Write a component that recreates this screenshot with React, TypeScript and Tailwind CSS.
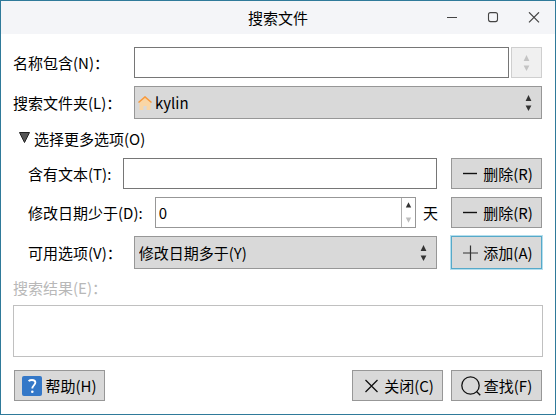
import { useState } from 'react';
import type { ReactNode } from 'react';

function Arrows({ className = 'fill-[#333333]' }: { className?: string }) {
  return (
    <svg width="7" height="17" viewBox="0 0 7 17" className={className} aria-hidden="true">
      <path d="M3.5 1 L6.4 7 H0.6 Z" />
      <path d="M3.5 17 L6.4 11.5 H0.6 Z" />
    </svg>
  );
}

function MinusIcon() {
  return (
    <svg width="20" height="20" viewBox="0 0 20 20" fill="none" stroke="#111111" strokeWidth="1.4" aria-hidden="true">
      <path d="M3 9.5 H17" />
    </svg>
  );
}

function PlusIcon() {
  return (
    <svg width="20" height="20" viewBox="0 0 20 20" fill="none" stroke="#333333" strokeWidth="1.2" aria-hidden="true">
      <path d="M3 10 H18 M10.5 2.5 V17.5" />
    </svg>
  );
}

function CrossIcon() {
  return (
    <svg width="20" height="20" viewBox="0 0 20 20" fill="none" stroke="#111111" strokeWidth="1.3" aria-hidden="true">
      <path d="M4.5 4 L16.5 16 M16.5 4 L4.5 16" />
    </svg>
  );
}

function SearchIcon() {
  return (
    <svg width="20" height="20" viewBox="0 0 20 20" fill="none" stroke="#111111" strokeWidth="1.3" aria-hidden="true">
      <circle cx="9.5" cy="9.5" r="8.7" />
      <path d="M15.5 15.5 L19.3 19.3" />
    </svg>
  );
}

function HelpIcon() {
  return (
    <svg width="20" height="20" viewBox="0 0 20 20" aria-hidden="true">
      <rect width="20" height="20" rx="2" fill="#3478c8" />
      <path d="M6.6 5.2 C7.4 4.4 8.6 4 10 4 C12.2 4 13.4 5 13.4 6.6 C13.4 9 10.3 9.2 10.3 12.6" fill="none" stroke="#ffffff" strokeWidth="1.8" />
      <circle cx="10.3" cy="15.8" r="1.3" fill="#ffffff" />
    </svg>
  );
}

function HomeIcon() {
  return (
    <svg width="14" height="14" viewBox="0 0 14 14" aria-hidden="true">
      <path d="M7 1 L12.5 6 V14 H8.6 V10 H5.4 V14 H1.5 V6 Z" fill="#fad6a5" />
      <path d="M0.5 6.5 L7 0.9 L13.5 6.5" fill="none" stroke="#f8993c" strokeWidth="1.5" />
    </svg>
  );
}

function ActionButton({ icon, children, focused = false }: { icon: ReactNode; children: ReactNode; focused?: boolean }) {
  const look = focused
    ? 'h-[33px] border-[#56a9c9] shadow-[0_0_0_1px_#b5dfee]'
    : 'h-[31px] border-[#979797]';
  return (
    <button
      type="button"
      className={`flex w-[91px] shrink-0 items-center justify-center gap-[3px] border bg-[#d9d9d9] whitespace-nowrap outline-none ${look}`}
    >
      {icon}
      <span>{children}</span>
    </button>
  );
}

function TitleBar() {
  return (
    <header className="grid h-[33px] grid-cols-[1fr_auto_1fr] items-center bg-[#f4f5f8]">
      <h1 className="col-start-2">搜索文件</h1>
      <div className="flex justify-end gap-[29px] pr-[15px]">
        <button type="button" aria-label="最小化">
          <svg width="12" height="12" viewBox="0 0 12 12" fill="none" stroke="#444444">
            <path d="M1 5.5 H11" />
          </svg>
        </button>
        <button type="button" aria-label="最大化">
          <svg width="12" height="12" viewBox="0 0 12 12" fill="none" stroke="#444444" strokeWidth="1.1">
            <rect x="1.5" y="0.6" width="9" height="9" rx="2" />
          </svg>
        </button>
        <button type="button" aria-label="关闭">
          <svg width="12" height="12" viewBox="0 0 12 12" fill="none" stroke="#444444" strokeWidth="1.2">
            <path d="M1 0.3 L11 10.3 M11 0.3 L1 10.3" />
          </svg>
        </button>
      </div>
    </header>
  );
}

export default function App() {
  const [open, setOpen] = useState(true);
  const [days, setDays] = useState(0);

  return (
    <main className="flex min-h-screen flex-col border border-[#2f7a9a] bg-white font-['Noto_Sans_CJK_SC',sans-serif] text-[15px] leading-5 text-black">
      <TitleBar />
      <form className="flex flex-1 flex-col px-3 pt-[13px]" onSubmit={(e) => e.preventDefault()}>
        <div className="flex flex-col gap-2 pr-px">
          <div className="flex items-center">
            <label htmlFor="name" className="w-[121px] shrink-0">名称包含(N)：</label>
            <input id="name" type="text" className="h-[31px] min-w-0 flex-1 border border-[#767676] bg-white px-1 outline-none" />
            <button type="button" disabled aria-label="历史记录" className="ml-[2px] flex h-[31px] w-[31px] items-center justify-center border border-[#cfcfcf] bg-[#f0f0f0]">
              <Arrows className="fill-[#c4c4c4]" />
            </button>
          </div>
          <div className="flex items-center">
            <label htmlFor="folder" className="w-[121px] shrink-0">搜索文件夹(L)：</label>
            <div className="relative min-w-0 flex-1">
              <select id="folder" className="block h-[33px] w-full appearance-none border border-[#979797] bg-[#d9d9d9] pl-5 outline-none">
                <option>kylin</option>
              </select>
              <span className="pointer-events-none absolute inset-y-0 left-1 flex items-center"><HomeIcon /></span>
              <span className="pointer-events-none absolute inset-y-0 right-[10px] flex items-center"><Arrows /></span>
            </div>
          </div>
        </div>

        <button type="button" aria-expanded={open} onClick={() => setOpen(!open)} className="mt-[10px] flex items-center gap-1 self-start pl-[6px]">
          <svg width="11" height="11" viewBox="0 0 11 11" className={open ? 'mb-[3px]' : 'mb-[3px] -rotate-90'} aria-hidden="true">
            <path d="M0.5 0.5 H10.5 L5.5 10.5 Z" fill="#555555" stroke="#222222" />
          </svg>
          选择更多选项(O)
        </button>

        {open && (
          <div className="mt-[9px] flex flex-col gap-2 pr-px pl-[15px]">
            <div className="flex items-center">
              <label htmlFor="text" className="mr-3 shrink-0">含有文本(T):</label>
              <input id="text" type="text" className="mr-[14px] h-[31px] min-w-0 flex-1 border border-[#767676] bg-white px-1 outline-none" />
              <ActionButton icon={<MinusIcon />}>删除(R)</ActionButton>
            </div>
            <div className="flex items-center">
              <label htmlFor="days" className="mr-3 shrink-0">修改日期少于(D):</label>
              <div className="flex h-[31px] min-w-0 flex-1 border border-[#979797] bg-white">
                <input
                  id="days"
                  type="number"
                  min={0}
                  value={days}
                  onChange={(e) => setDays(Number(e.target.value))}
                  className="min-w-0 flex-1 [appearance:textfield] bg-transparent px-[3px] outline-none [&::-webkit-inner-spin-button]:appearance-none"
                />
                <div className="flex w-[14px] flex-col border-l border-[#b0b0b0]">
                  <button type="button" aria-label="增加" onClick={() => setDays(days + 1)} className="flex flex-1 items-center justify-center">
                    <svg width="7" height="6" viewBox="0 0 7 6" fill="#333333"><path d="M3.5 0.3 L6.2 5.5 H0.8 Z" /></svg>
                  </button>
                  <button type="button" aria-label="减少" disabled={days <= 0} onClick={() => setDays(days - 1)} className="flex flex-1 items-center justify-center">
                    <svg width="7" height="6" viewBox="0 0 7 6" fill="#bdbdbd"><path d="M3.5 5.7 L6.2 0.5 H0.8 Z" /></svg>
                  </button>
                </div>
              </div>
              <span className="mr-[13px] ml-[7px]">天</span>
              <ActionButton icon={<MinusIcon />}>删除(R)</ActionButton>
            </div>
            <div className="flex items-center">
              <label htmlFor="option" className="mr-3 shrink-0">可用选项(V)：</label>
              <div className="relative mr-[14px] min-w-0 flex-1">
                <select id="option" className="block h-[33px] w-full appearance-none border border-[#979797] bg-[#d9d9d9] pl-1 outline-none">
                  <option>修改日期多于(Y)</option>
                </select>
                <span className="pointer-events-none absolute inset-y-0 right-[10px] flex items-center"><Arrows /></span>
              </div>
              <ActionButton icon={<PlusIcon />} focused>添加(A)</ActionButton>
            </div>
          </div>
        )}

        <p id="results-label" className="mt-[9px] text-[#b8b8b8]">搜索结果(E)：</p>
        <div role="listbox" aria-labelledby="results-label" aria-disabled="true" className="mt-[7px] min-h-[52px] flex-1 border border-[#c0c0c0] bg-white" />

        <footer className="flex gap-2 py-[13px] pr-px pl-px">
          <ActionButton icon={<HelpIcon />}>帮助(H)</ActionButton>
          <span className="flex-1" />
          <ActionButton icon={<CrossIcon />}>关闭(C)</ActionButton>
          <ActionButton icon={<SearchIcon />}>查找(F)</ActionButton>
        </footer>
      </form>
    </main>
  );
}
